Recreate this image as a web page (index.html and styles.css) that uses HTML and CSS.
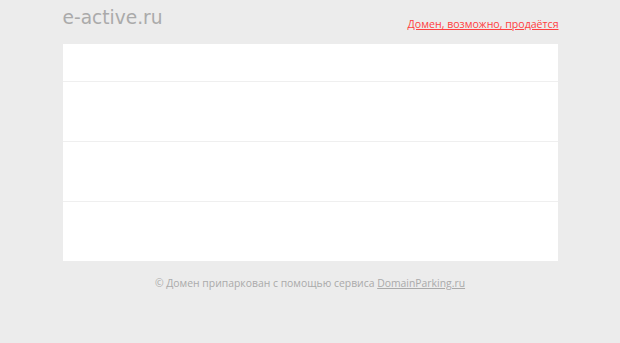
FILE: index.html
```html
<!DOCTYPE html>
<html lang="ru">
<head>
<meta charset="utf-8">
<title>e-active.ru</title>
<link rel="stylesheet" href="styles.css">
</head>
<body>
<div class="page">
  <header class="top">
    <div class="logo">e-active.ru</div>
    <a class="sale" href="#">Домен, возможно, продаётся</a>
  </header>
  <main class="box">
    <div class="row row-head"></div>
    <div class="row"></div>
    <div class="row"></div>
    <div class="row row-last"></div>
  </main>
  <footer class="foot">© Домен припаркован с помощью сервиса <a href="#">DomainParking.ru</a></footer>
</div>
</body>
</html>
```
FILE: styles.css
```css
html, body {
  margin: 0;
  padding: 0;
  background: #ececec;
  font-family: "Open Sans", "DejaVu Sans", sans-serif;
}
.page {
  width: 495px;
  margin: 0 auto;
}
.top {
  height: 44px;
  display: flex;
  justify-content: space-between;
  align-items: flex-start;
}
.logo {
  font-family: "DejaVu Sans", sans-serif;
  font-size: 18.6px;
  color: #aaaaaa;
  line-height: 22px;
  margin-top: 7px;
}
.sale {
  font-size: 10.6px;
  line-height: 14px;
  color: #ff4040;
  text-decoration: underline;
  margin-top: 17px;
  margin-right: -1px;
}
.box {
  background: #fff;
}
.row {
  height: 60px;
  border-top: 1px solid #efefef;
  box-sizing: border-box;
}
.row-head {
  height: 37px;
  border-top: none;
}
.foot {
  margin-top: 15px;
  text-align: center;
  font-size: 10.4px;
  line-height: 14px;
  color: #aaaaaa;
}
.foot a {
  color: #aaaaaa;
  text-decoration: underline;
}
```
